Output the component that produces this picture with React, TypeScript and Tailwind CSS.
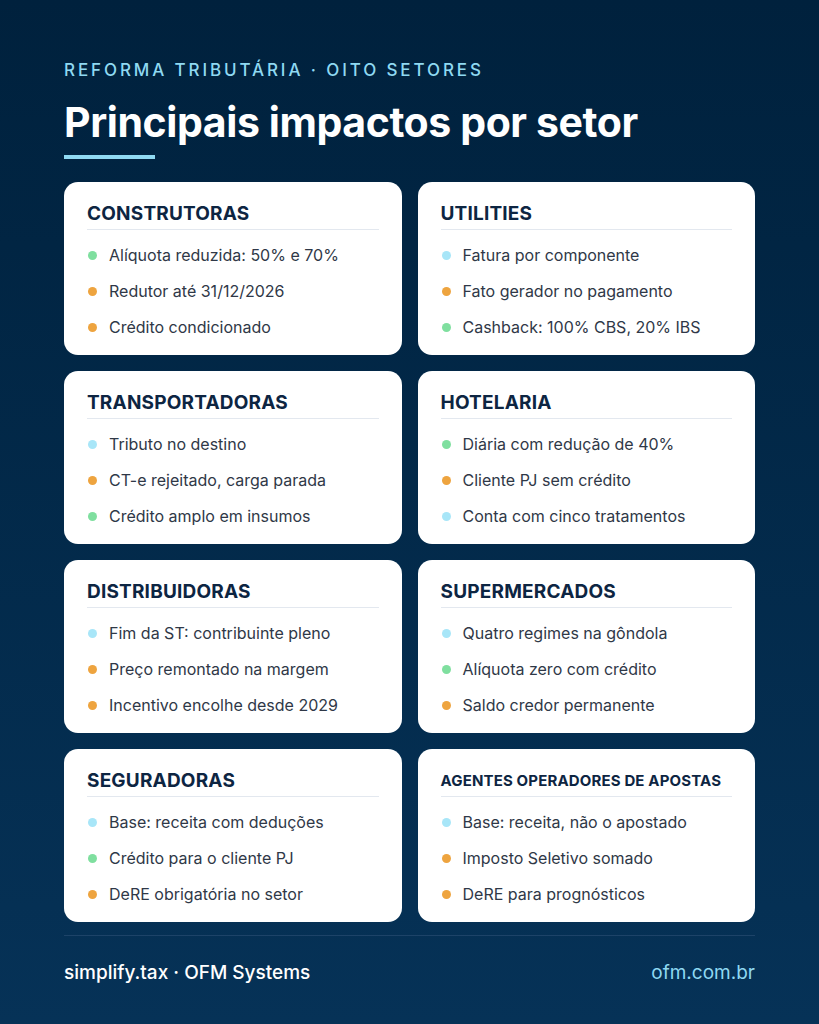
import React from "react";

type Tone = "cyan" | "orange" | "green";

type Sector = {
  title: string;
  small?: boolean;
  items: [Tone, string][];
};

const dotClass: Record<Tone, string> = {
  cyan: "bg-[#a8e6f8]",
  orange: "bg-[#eea43f]",
  green: "bg-[#7fdf9f]",
};

const sectors: Sector[] = [
  {
    title: "CONSTRUTORAS",
    items: [
      ["green", "Alíquota reduzida: 50% e 70%"],
      ["orange", "Redutor até 31/12/2026"],
      ["orange", "Crédito condicionado"],
    ],
  },
  {
    title: "UTILITIES",
    items: [
      ["cyan", "Fatura por componente"],
      ["orange", "Fato gerador no pagamento"],
      ["green", "Cashback: 100% CBS, 20% IBS"],
    ],
  },
  {
    title: "TRANSPORTADORAS",
    items: [
      ["cyan", "Tributo no destino"],
      ["orange", "CT-e rejeitado, carga parada"],
      ["green", "Crédito amplo em insumos"],
    ],
  },
  {
    title: "HOTELARIA",
    items: [
      ["green", "Diária com redução de 40%"],
      ["orange", "Cliente PJ sem crédito"],
      ["cyan", "Conta com cinco tratamentos"],
    ],
  },
  {
    title: "DISTRIBUIDORAS",
    items: [
      ["cyan", "Fim da ST: contribuinte pleno"],
      ["orange", "Preço remontado na margem"],
      ["orange", "Incentivo encolhe desde 2029"],
    ],
  },
  {
    title: "SUPERMERCADOS",
    items: [
      ["cyan", "Quatro regimes na gôndola"],
      ["green", "Alíquota zero com crédito"],
      ["orange", "Saldo credor permanente"],
    ],
  },
  {
    title: "SEGURADORAS",
    items: [
      ["cyan", "Base: receita com deduções"],
      ["green", "Crédito para o cliente PJ"],
      ["orange", "DeRE obrigatória no setor"],
    ],
  },
  {
    title: "AGENTES OPERADORES DE APOSTAS",
    small: true,
    items: [
      ["cyan", "Base: receita, não o apostado"],
      ["orange", "Imposto Seletivo somado"],
      ["orange", "DeRE para prognósticos"],
    ],
  },
];

function SectorCard({ sector }: { sector: Sector }) {
  return (
    <div className="flex h-[173px] flex-col rounded-[14px] bg-white px-[23px] pt-[21px]">
      <h2
        className={
          sector.small
            ? "flex h-[22px] items-center text-[15px] font-bold tracking-[0.01em] text-[#0d2542]"
            : "flex h-[22px] items-center text-[19px] font-bold tracking-[0.01em] text-[#0d2542]"
        }
      >
        {sector.title}
      </h2>
      <div className="mt-[4px] h-px bg-[#e3e8ef]" />
      <ul className="mt-[14px] flex flex-col gap-[14px]">
        {sector.items.map(([tone, text]) => (
          <li key={text} className="flex h-[22px] items-center">
            <span className={`ml-[1px] h-[9px] w-[9px] shrink-0 rounded-full ${dotClass[tone]}`} />
            <span className="ml-[12px] text-[16px] text-[#2f3847]">{text}</span>
          </li>
        ))}
      </ul>
    </div>
  );
}

export default function App() {
  return (
    <div
      className="flex h-[1024px] w-[819px] flex-col bg-gradient-to-b from-[#00213d] to-[#063257] px-16 pt-[58px]"
      style={{ fontFamily: "Inter, 'Noto Sans', sans-serif" }}
    >
      <p className="h-6 text-[17px] leading-6 font-medium tracking-[0.17em] text-[#8fd9f2]">
        REFORMA TRIBUTÁRIA · OITO SETORES
      </p>
      <h1 className="mt-[17px] h-[46px] text-[41px] leading-[46px] font-bold tracking-[-0.01em] text-white">
        Principais impactos por setor
      </h1>
      <div className="mt-[10px] h-1 w-[91px] bg-[#8fd9f2]" />
      <div className="mt-[23px] grid grid-cols-2 gap-4">
        {sectors.map((sector) => (
          <SectorCard key={sector.title} sector={sector} />
        ))}
      </div>
      <div className="mt-[13px] h-px bg-[#1d4368]" />
      <div className="mt-[23px] flex items-center justify-between text-[19px]">
        <span className="font-medium text-white">simplify.tax · OFM Systems</span>
        <span className="text-[#8fd9f2]">ofm.com.br</span>
      </div>
    </div>
  );
}
